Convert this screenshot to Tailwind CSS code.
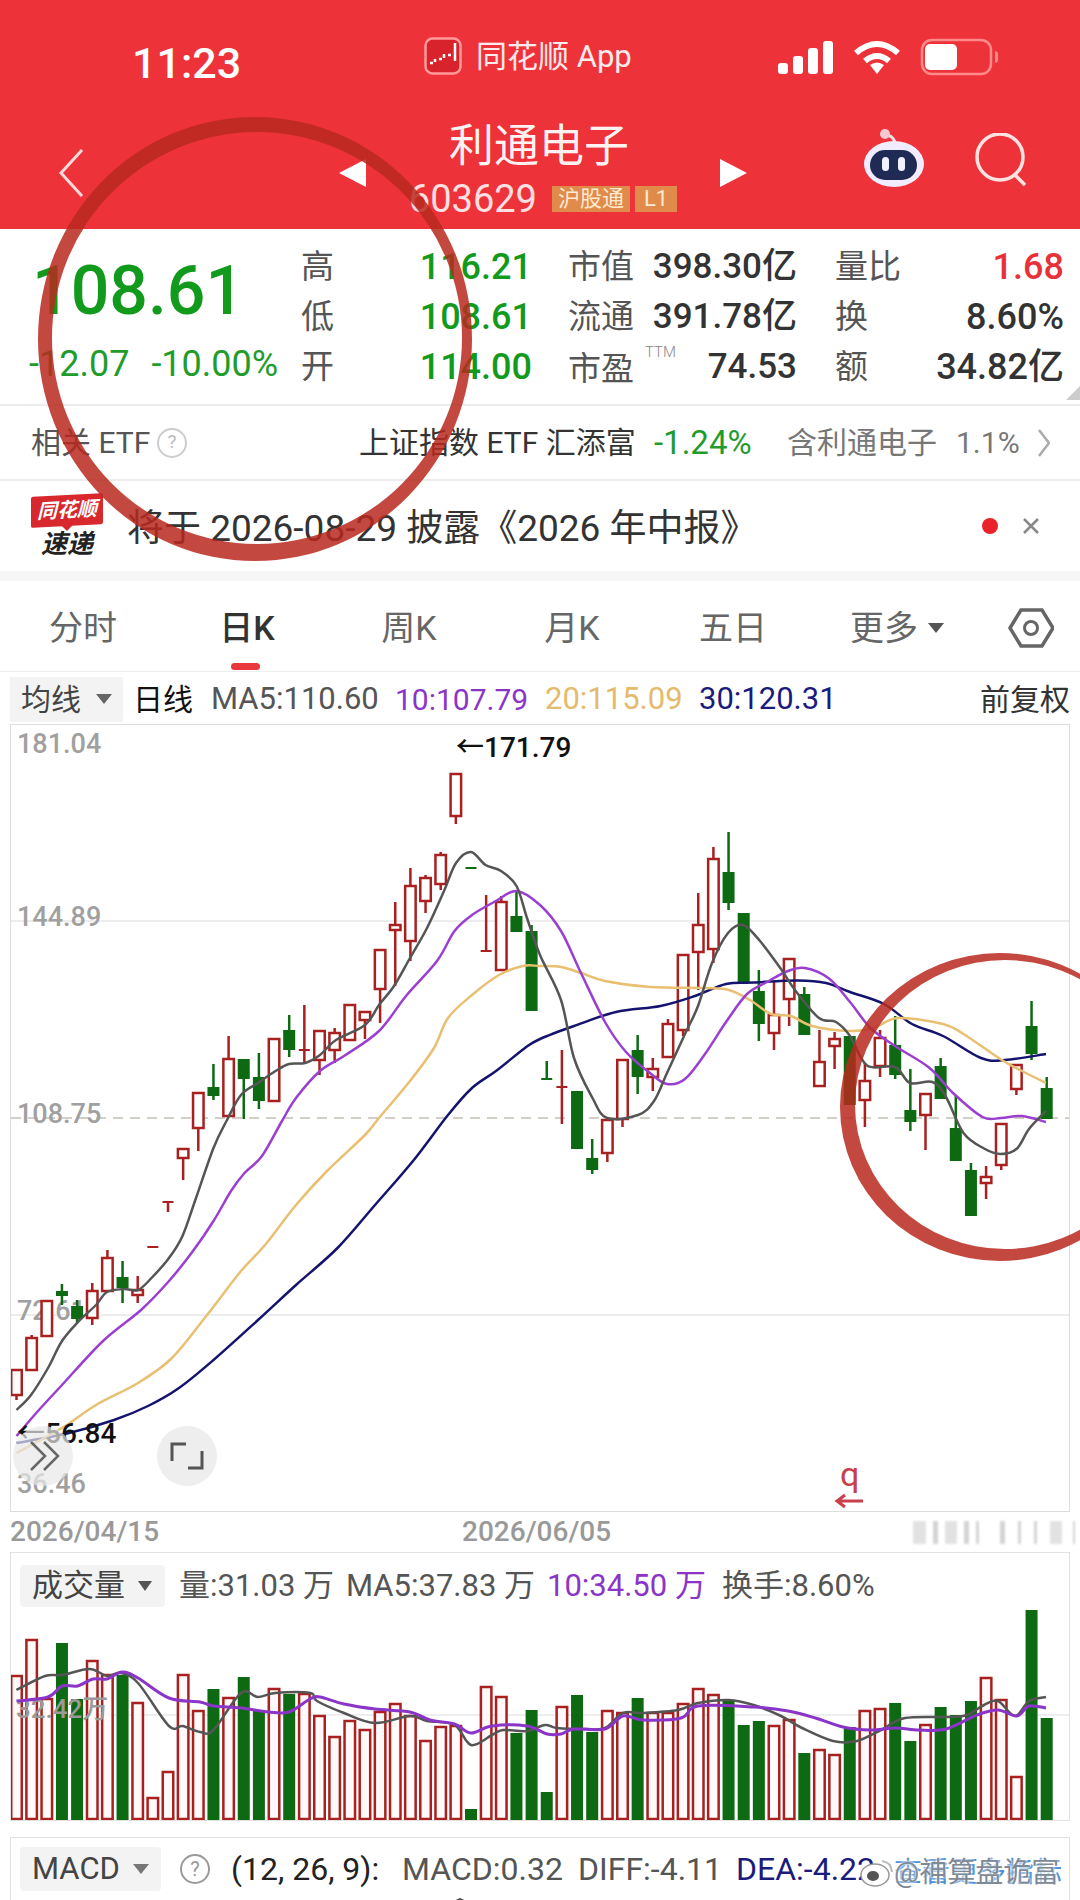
<!DOCTYPE html>
<html lang="zh">
<head>
    <meta charset="UTF-8">
    <title>利通电子</title>
    <script src="https://cdn.jsdelivr.net/npm/@tailwindcss/browser@4"></script>
</head>
<body class="bg-white">
<div class="relative w-[1080px] h-[1900px] overflow-hidden bg-white font-[Roboto,'Noto_Sans_CJK_SC',sans-serif] text-[#333]">

    <!-- 红色头部 -->
    <header class="h-[229px] bg-[#ee3239] text-white">
        <div class="flex items-center h-[118px]">
            <span class="ml-[132px] w-[292px] text-[43px] font-medium leading-none mt-[8px]">11:23</span>
            <svg class="w-[38px] h-[38px] -mt-[6px]" viewBox="0 0 38 38">
                <rect x="1.5" y="1.5" width="35" height="35" rx="7" fill="#d8232c" stroke="#ff9a9a" stroke-width="2.5"/>
                <path d="M6 26h3M11 25v-3M15 22h3M20 21v-4M24 18h3M31 24V6" stroke="#fff" stroke-width="2.5" fill="none"/>
            </svg>
            <span class="ml-[14px] w-[158px] text-[31px] leading-none text-white/90 -mt-[6px]">同花顺 App</span>
            <svg class="ml-auto mr-[82px] w-[224px] h-[40px] -mt-[3px]" viewBox="774 44 224 40">
                <g fill="#fff">
                    <rect x="778" y="69" width="10" height="11" rx="3"/>
                    <rect x="793" y="62" width="10" height="18" rx="3"/>
                    <rect x="808" y="54" width="10" height="26" rx="3"/>
                    <rect x="823" y="47" width="10" height="33" rx="3"/>
                    <path d="M877 80l-7-9q7-5 14 0z"/>
                    <rect x="925" y="50" width="32" height="26" rx="5"/>
                    <path d="M995 57q4 1 4 6t-4 6z" fill="#ff8a8a"/>
                </g>
                <path d="M856 59q21-18 42 0M865 67q12-10 24 0" fill="none" stroke="#fff" stroke-width="6"/>
                <rect x="922" y="46" width="69" height="34" rx="10" fill="none" stroke="#ff8a8a" stroke-width="2.5"/>
            </svg>
        </div>
        <div class="flex h-[111px]">
            <svg class="ml-[58px] mt-[31px] w-[26px] h-[48px]" viewBox="0 0 26 48"><path d="M24 1L3 24l21 23" fill="none" stroke="#ffd9d9" stroke-width="3"/></svg>
            <div class="ml-[255px] mt-[41px] w-0 h-0 border-y-[14px] border-y-transparent border-r-[27px] border-r-white"></div>
            <div class="w-[354px] pr-[8px] flex flex-col items-center">
                <div class="text-[45px] leading-[58px] text-white/95">利通电子</div>
                <div class="flex items-center gap-[5px] ml-[8px] mt-[8px]">
                    <span class="text-[38px] leading-[30px] text-white/85 mr-[10px]">603629</span>
                    <span class="bg-[#e08a4c] text-[#ffe9d0] text-[22px] leading-[26px] px-[6px]">沪股通</span>
                    <span class="bg-[#e08a4c] text-[#ffe9d0] text-[22px] leading-[26px] px-[9px]">L1</span>
                </div>
            </div>
            <div class="mt-[41px] w-0 h-0 border-y-[14px] border-y-transparent border-l-[27px] border-l-white"></div>
            <svg class="ml-[114px] mt-[11px] w-[66px] h-[60px]" viewBox="859 141 66 60">
                <path d="M884 147q6 0 9 7" fill="none" stroke="#f6dfe8" stroke-width="3"/>
                <circle cx="883" cy="146" r="5" fill="#f6c9d2"/>
                <ellipse cx="892" cy="176" rx="30" ry="23" fill="#f1ecff"/>
                <rect x="868" y="162" width="47" height="30" rx="15" fill="#1f2a55"/>
                <rect x="880" y="169" width="7" height="14" rx="3.5" fill="#f2f2ff"/>
                <rect x="896" y="169" width="7" height="14" rx="3.5" fill="#f2f2ff"/>
            </svg>
            <svg class="ml-[48px] mt-[15px] w-[54px] h-[54px]" viewBox="973 145 54 54">
                <circle cx="998" cy="169" r="23" fill="none" stroke="#ffe3e3" stroke-width="3.5"/>
                <path d="M1013 187l10 10" stroke="#ffe3e3" stroke-width="3.5"/>
            </svg>
        </div>
    </header>

    <!-- 行情 -->
    <section class="relative h-[177px] flex border-b-2 border-[#ececec]">
        <div class="w-[301px] pl-[29px]">
            <div class="text-[68px] leading-[70px] mt-[27px] font-medium text-[#119a1c] ml-[3px]">108.61</div>
            <div class="flex mt-[20px] text-[36px] leading-[36px] text-[#1f9c2c] whitespace-nowrap"><span>-12.07</span><span class="ml-[22px]">-10.00%</span></div>
        </div>
        <div class="w-[231px] pt-[13px] text-[36px] leading-[50px] font-medium text-[#119a1c]">
            <div class="flex justify-between"><span class="text-[33px] font-normal text-[#555]">高</span>116.21</div>
            <div class="flex justify-between"><span class="text-[33px] font-normal text-[#555]">低</span>108.61</div>
            <div class="flex justify-between"><span class="text-[33px] font-normal text-[#555]">开</span>114.00</div>
        </div>
        <div class="ml-[36px] w-[229px] pt-[13px] text-[35px] leading-[50px] font-medium">
            <div class="flex justify-between"><span class="text-[33px] font-normal text-[#555]">市值</span>398.30亿</div>
            <div class="flex justify-between"><span class="text-[33px] font-normal text-[#555]">流通</span>391.78亿</div>
            <div class="flex justify-between"><span class="text-[33px] font-normal text-[#555] relative top-[2px]">市盈<sup class="absolute left-[77px] top-[8px] text-[15px] font-light text-[#888]">TTM</sup></span>74.53</div>
        </div>
        <div class="ml-[38px] w-[229px] pt-[13px] text-[36px] leading-[50px] font-medium">
            <div class="flex justify-between"><span class="text-[33px] font-normal text-[#555]">量比</span><span class="text-[#e8323a]">1.68</span></div>
            <div class="flex justify-between"><span class="text-[33px] font-normal text-[#555]">换</span>8.60%</div>
            <div class="flex justify-between"><span class="text-[33px] font-normal text-[#555]">额</span>34.82亿</div>
        </div>
        <div class="absolute right-0 bottom-[4px] w-0 h-0 border-l-[14px] border-l-transparent border-b-[14px] border-b-[#ccc]"></div>
    </section>

    <!-- ETF -->
    <section class="h-[75px] flex items-center border-b-2 border-[#ececec] text-[30px] pl-[31px] whitespace-nowrap">
        <span class="w-[122px] text-[#555]">相关 ETF</span>
        <span class="ml-[4px] w-[30px] h-[30px] rounded-full border-2 border-[#ccc] text-[#bbb] text-[19px] flex items-center justify-center">?</span>
        <span class="ml-[172px] w-[295px]">上证指数 ETF 汇添富</span>
        <span class="w-[133px] text-[33px] text-[#1f9c2c]">-1.24%</span>
        <span class="w-[169px] text-[#777]">含利通电子</span>
        <span class="w-[82px] text-[#777]">1.1%</span>
        <svg class="w-[12px] h-[28px]" viewBox="0 0 12 28"><path d="M1 1l10 13L1 27" fill="none" stroke="#aaa" stroke-width="2.5"/></svg>
    </section>

    <!-- 速递 -->
    <section class="h-[90px] flex items-center pl-[31px]">
        <div class="w-[72px] flex flex-col items-center">
            <div class="relative bg-[#d9272e] w-[72px] h-[31px] text-white text-[20px] font-bold italic leading-[31px] text-center rounded-[2px] -skew-y-3">同花顺
                <div class="absolute left-[30px] top-[30px] w-0 h-0 border-x-[6px] border-x-transparent border-t-[6px] border-t-[#d9272e]"></div>
            </div>
            <div class="text-[26px] leading-[28px] mt-[4px] font-bold italic text-[#222]">速递</div>
        </div>
        <span class="ml-[24px] w-[610px] text-[37px] mt-[5px] whitespace-nowrap">将于 2026-08-29 披露《2026 年中报》</span>
        <span class="ml-[245px] w-[16px] h-[16px] rounded-full bg-[#e8232c]"></span>
        <svg class="ml-[24px] w-[18px] h-[18px]" viewBox="0 0 18 18"><path d="M2 2l14 14M16 2L2 16" stroke="#888" stroke-width="2.5"/></svg>
    </section>
    <div class="h-[10px] bg-[#f6f6f6]"></div>

    <!-- 周期 -->
    <nav class="relative h-[91px] grid grid-cols-[166px_162px_162px_164px_158px_170px_98px] items-center pt-[4px] border-b border-[#eee] text-[34px] text-[#666] text-center">
        <span>分时</span>
        <span class="text-[#333] font-medium">日K</span>
        <span>周K</span>
        <span>月K</span>
        <span>五日</span>
        <span class="flex items-center justify-center gap-[10px]">更多<i class="w-0 h-0 border-x-[8px] border-x-transparent border-t-[10px] border-t-[#555]"></i></span>
        <svg class="w-[46px] h-[40px] mx-auto" viewBox="1007 608 46 40">
            <path d="M1009 628l11-18h21l11 18-11 18h-21z" fill="none" stroke="#666" stroke-width="3.5"/>
            <circle cx="1030" cy="628" r="6.5" fill="none" stroke="#666" stroke-width="3"/>
        </svg>
        <div class="absolute left-[231px] bottom-[1px] w-[29px] h-[7px] rounded-full bg-[#e8383c]"></div>
    </nav>

    <!-- 均线 -->
    <div class="h-[52px] flex items-center pl-[10px] pt-[2px] text-[31px] whitespace-nowrap">
        <div class="w-[113px] h-[45px] bg-[#f3f3f3] flex items-center pl-[11px] text-[30px] text-[#444]">均线<i class="ml-[15px] w-0 h-0 border-x-[8px] border-x-transparent border-t-[10px] border-t-[#666]"></i></div>
        <span class="ml-[10px] w-[78px] text-[30px] text-[#111]">日线</span>
        <span class="w-[184px] text-[#555]">MA5:110.60</span>
        <span class="w-[150px] text-[30px] text-[#8a35c8]">10:107.79</span>
        <span class="w-[154px] text-[#e3bb6d]">20:115.09</span>
        <span class="text-[#1b1b7e]">30:120.31</span>
        <span class="ml-auto mr-[10px] text-[30px] text-[#333]">前复权</span>
    </div>

    <!-- K线 -->
    <div class="relative mx-[10px] h-[788px] border border-[#ddd]">
        <svg id="kline" class="absolute inset-0 w-full h-full" viewBox="11 727 1058 786"></svg>
    </div>
    <div class="h-[40px] flex items-center pl-[10px] text-[28px] text-[#999] font-medium">
        <span class="w-[452px]">2026/04/15</span>
        <span class="w-[451px]">2026/06/05</span>
        <div class="flex h-[23px] gap-[7px] blur-[1px]">
            <i class="w-[13px] bg-[#e2e2e2]"></i><i class="w-[5px] bg-[#d4d4d4]"></i><i class="w-[12px] bg-[#e2e2e2]"></i><i class="w-[5px] bg-[#d4d4d4]"></i><i class="w-[3px] bg-[#d4d4d4]"></i><i class="ml-[14px] w-[5px] bg-[#d4d4d4]"></i><i class="ml-[6px] w-[3px] bg-[#d4d4d4]"></i><i class="ml-[6px] w-[3px] bg-[#d4d4d4]"></i><i class="ml-[6px] w-[12px] bg-[#e2e2e2]"></i><i class="ml-[4px] w-[2px] bg-[#d4d4d4]"></i>
        </div>
    </div>

    <!-- 成交量 -->
    <div class="relative mx-[10px] h-[269px] border border-[#e2e2e2]">
        <svg id="vol" class="absolute inset-0 w-full h-full" viewBox="11 1555 1058 267"></svg>
        <div class="relative flex items-center h-[42px] mt-[12px] ml-[9px] text-[31px] text-[#555] whitespace-nowrap">
            <div class="w-[145px] h-[42px] bg-[#f3f3f3] rounded-[4px] flex items-center pl-[12px] text-[#444]">成交量<i class="ml-[13px] w-0 h-0 border-x-[7px] border-x-transparent border-t-[10px] border-t-[#555]"></i></div>
            <span class="ml-[14px] w-[167px]">量:31.03 万</span>
            <span class="w-[201px]">MA5:37.83 万</span>
            <span class="w-[175px] text-[#8a35c8]">10:34.50 万</span>
            <span>换手:8.60%</span>
        </div>
    </div>

    <!-- MACD -->
    <div class="relative mx-[10px] mt-[16px] h-[70px] border border-[#e2e2e2] border-b-0">
        <div class="flex items-center h-[44px] mt-[9px] ml-[9px] text-[32px] text-[#555] whitespace-nowrap">
            <div class="w-[141px] h-[44px] bg-[#f3f3f3] rounded-[4px] flex items-center pl-[12px] text-[31px] text-[#444]">MACD<i class="ml-[13px] w-0 h-0 border-x-[8px] border-x-transparent border-t-[10px] border-t-[#777]"></i></div>
            <span class="ml-[19px] w-[30px] h-[30px] rounded-full border-2 border-[#999] text-[#999] text-[20px] flex items-center justify-center">?</span>
            <span class="ml-[21px] w-[171px] text-[#222]">(12, 26, 9):</span>
            <span class="w-[176px]">MACD:0.32</span>
            <span class="w-[158px]">DIFF:-4.11</span>
            <span class="text-[#1b1b7e]">DEA:-4.22</span>
        </div>
        <svg class="absolute left-[434px] bottom-0 w-[30px] h-[10px]" viewBox="0 0 30 10"><path d="M1 9l14-7 14 7" fill="none" stroke="#444" stroke-width="2"/></svg>
    </div>

    <!-- 圈注 -->
    <svg class="absolute inset-0 w-[1080px] h-[1900px] pointer-events-none" viewBox="0 0 1080 1900">
        <path fill-rule="evenodd" fill="#b9291f" opacity=".85" d="M38 339A217 222 0 1 0 472 339A217 222 0 1 0 38 339ZM52 338A205 206 0 1 0 462 338A205 206 0 1 0 52 338Z"/>
        <path fill-rule="evenodd" fill="#b9291f" opacity=".85" d="M840 1107A160 154 0 1 0 1160 1107A160 154 0 1 0 840 1107ZM855 1104.5A150 144.5 0 1 0 1155 1104.5A150 144.5 0 1 0 855 1104.5Z"/>
    </svg>

    <!-- 水印 -->
    <div class="absolute left-[860px] top-[1855px] h-[36px] w-[210px] flex items-center">
        <svg class="w-[34px] h-[30px] shrink-0" viewBox="0 0 34 30">
            <ellipse cx="15" cy="17" rx="14" ry="11" fill="#fff" stroke="#999" stroke-width="1.5"/>
            <ellipse cx="13" cy="18" rx="6" ry="5" fill="#555"/>
            <path d="M22 3q9 1 10 11" fill="none" stroke="#bbb" stroke-width="2"/>
        </svg>
        <span class="relative text-[28px] leading-none whitespace-nowrap text-[#4a8ed6]">查看更多指标
            <span class="absolute left-0 top-0 text-[#7f8a96] [text-shadow:0_0_3px_#fff,0_0_3px_#fff]">@神算盘诡富</span>
        </span>
    </div>
</div>

<script>
    const X = i => 16.5 + 15.15 * i;
    const RED = '#a8201f', GREEN = '#0d6a12';

    // [颜色, 上影, 实体上, 实体下, 下影]
    const candles = [
        ['r',1372,1372,1397,1402],['r',1337,1340,1372,1372],['r',1303,1303,1338,1338],['g',1286,1293,1298,1307],
        ['g',1302,1308,1321,1325],['r',1285,1293,1320,1327],['r',1252,1260,1293,1293],['g',1263,1279,1290,1305],
        ['r',1278,1292,1297,1305],['r',1248,1248,1250,1250],['r',1203,1203,1205,1214],['r',1151,1151,1160,1182],
        ['r',1095,1095,1130,1153],['g',1066,1089,1098,1102],['r',1038,1061,1118,1118],['g',1061,1061,1081,1121],
        ['g',1055,1079,1103,1111],['r',1041,1041,1103,1103],['g',1017,1032,1052,1059],['r',1007,1051,1053,1065],
        ['r',1033,1033,1062,1077],['r',1030,1035,1052,1065],['r',1007,1007,1042,1042],['r',1014,1014,1022,1041],
        ['r',952,952,991,1025],['r',904,927,932,988],['r',870,888,943,963],['r',877,880,903,915],
        ['r',854,857,886,892],['r',776,776,818,826],['g',869,869,871,871],['r',897,952,954,954],
        ['r',898,904,972,972],['g',892,918,934,934],['g',927,933,1013,1013],['g',1063,1080,1082,1082],
        ['r',1052,1088,1090,1126],['g',1093,1093,1151,1151],['g',1141,1160,1172,1176],['r',1122,1122,1155,1164],
        ['r',1062,1062,1121,1129],['g',1037,1052,1079,1096],['r',1060,1071,1079,1093],['r',1021,1026,1059,1059],
        ['r',957,957,1032,1038],['r',895,927,954,992],['r',849,861,951,965],['g',834,874,905,912],
        ['g',915,915,985,985],['g',972,993,1026,1043],['r',984,1017,1035,1052],['r',961,961,1001,1028],
        ['g',989,996,1037,1037],['r',1032,1064,1088,1088],['r',1034,1041,1048,1071],['g',1038,1038,1107,1107],
        ['r',1065,1083,1102,1129],['r',1032,1040,1068,1079],['g',1018,1047,1077,1081],['g',1071,1112,1124,1133],
        ['r',1096,1096,1117,1152],['g',1060,1068,1101,1101],['g',1097,1130,1163,1163],['g',1165,1172,1218,1218],
        ['r',1168,1179,1185,1201],['r',1126,1126,1167,1172],['r',1067,1067,1091,1097],['g',1003,1028,1056,1062],
        ['g',1079,1090,1121,1121]
    ];

    const ma5 = '16.5,1412 31,1397 48,1370 62,1343 79,1323 96,1307 107,1294 124,1291 138,1292 151.5,1280 169,1260 182.5,1238 196,1200 213.5,1150 227,1122 241,1097 258,1085 275.5,1073 289,1066 305,1065 320,1057 336,1042 365,1027 379,1007 394,988 410,960 427,930 444,893 456,865 471,854 485.5,867 501,873 516.5,888 527,920 540,957 561,1002 574,1060 592,1099 607,1120 638,1117 654,1103 667,1075 685,1036 698,1008 712,965 728,935 743,927 760,943 781,971 795,992 819,1020 836,1024 850,1038 867,1067.5 895,1069 910,1085 932.5,1084 946,1099 963.5,1135 984,1150.5 1001,1156 1017,1150.5 1029,1131 1046,1113';
    const ma10 = '16.5,1438 38,1413 62,1387 103,1343 141,1312 169,1283 193,1253 213.5,1223 231,1193 244.5,1175 262,1158 282,1123 296,1100 320,1073 344,1058 379,1033 406,998 437,963 454.5,933 472,917 496,903 516.5,893 540,907 561,933 581,975 605,1024 626,1054 650,1075 667,1086 685,1081 705,1056 726,1024 747,996 767,984 788,973 805,970 829,980.5 850,1004 870.5,1030 895,1048 929,1069.5 953,1095 982.5,1119 1001,1120 1022,1118 1046,1124';
    const ma20 = '16.5,1455 62,1430 96,1407 138,1385 172,1360 207,1317 241,1273 265,1247 296,1207 327,1173 365,1137 379,1120 410,1083 434,1050 448,1020 472,997 499,977 523,968 540,968 561,969 581,975 605,983 650,989 705,990 729,992 750,1002 771,1016 791,1018 812,1028 850,1033 874,1030 898,1020 943,1026 963.5,1036 1001,1061.5 1022,1073 1046,1085';
    const ma30 = '16.5,1445 69,1435 114,1422 148,1408 179,1390 213.5,1362 258,1322 296,1287 337.5,1250 375,1207 413,1163 448,1117 472,1090 496,1073 525,1050 540,1041 574,1028 616,1014 660.5,1008 695,998 726,986 753.5,984.5 798,982.5 826,985 850,994 884,1006 912,1026 943,1038 981,1060 1005,1062 1046,1056';

    // 折线点转平滑曲线
    const smooth = str => {
        const p = str.split(' ').map(s => s.split(',').map(Number));
        let d = `M${p[0][0]} ${p[0][1]}`;
        for (let i = 0; i < p.length - 1; i++) {
            const a = p[i - 1] || p[i], b = p[i], c = p[i + 1], e = p[i + 2] || c;
            d += `C${b[0] + (c[0] - a[0]) / 6} ${b[1] + (c[1] - a[1]) / 6} ${c[0] - (e[0] - b[0]) / 6} ${c[1] - (e[1] - b[1]) / 6} ${c[0]} ${c[1]}`;
        }
        return d;
    };
    const line = (pts, color, w = 2) => `<path d="${smooth(pts)}" fill="none" stroke="${color}" stroke-width="${w}"/>`;
    const label = (x, y, t, size = 27, fill = '#a0a0a0', weight = 500) => `<text x="${x}" y="${y}" font-size="${size}" fill="${fill}" font-weight="${weight}">${t}</text>`;

    let k = '';
    k += '<path d="M11 923H1069M11 1317H1069" stroke="#e8e8e8" stroke-width="1.5"/>';
    k += '<path d="M11 1120H1069" stroke="#c4c0b4" stroke-width="1.5" stroke-dasharray="10 7"/>';
    k += label(17, 755, '181.04') + label(17, 928, '144.89') + label(17, 1125, '108.75') + label(17, 1322, '72.61') + label(17, 1495, '36.46');

    candles.forEach((c, i) => {
        const x = X(i), color = c[0] === 'r' ? RED : GREEN;
        const thin = c[3] - c[2] < 4;
        k += `<path d="M${x} ${c[1]}V${c[2]}M${x} ${c[3]}V${c[4]}" stroke="${color}" stroke-width="2.5"/>`;
        if (thin) k += `<rect x="${x - 5.5}" y="${c[2]}" width="11" height="${c[3] - c[2]}" fill="${color}"/>`;
        else if (c[0] === 'r') k += `<rect x="${x - 5.25}" y="${c[2]}" width="10.5" height="${c[3] - c[2]}" fill="#fff" stroke="${color}" stroke-width="2.5"/>`;
        else k += `<rect x="${x - 6}" y="${c[2]}" width="12" height="${c[3] - c[2]}" fill="${color}"/>`;
    });

    k += line(ma30, '#14146e', 2.5) + line(ma20, '#e9bf72', 2.5) + line(ma10, '#9b3fd0', 2.5) + line(ma5, '#555', 2.5);
    k += label(456, 759, '←171.79', 28, '#111');
    k += label(17, 1445, '←56.84', 28, '#111');
    k += '<circle cx="43" cy="1458" r="30" fill="#e8e8e8" fill-opacity=".7"/><path d="M31 1444l14 14-14 14M44 1444l14 14-14 14" fill="none" stroke="#666" stroke-width="2.5"/>';
    k += '<circle cx="187" cy="1458" r="30" fill="#eee"/><path d="M172 1463v-17h14M202 1453v17h-14" fill="none" stroke="#555" stroke-width="3"/>';
    k += '<text x="840" y="1488" font-size="34" fill="#c9404a">q</text><path d="M863 1503H837M845 1497l-8 6 8 6" fill="none" stroke="#c9404a" stroke-width="3"/>';
    document.getElementById('kline').innerHTML = k;

    // 成交量
    const volTops = [1678,1642,1701,1645,1701,1663,1677,1677,1705,1800,1774,1677,1713,1691,1700,1679,1713,1691,1696,1696,1718,1739,1723,1732,1714,1706,1718,1743,1729,1728,1811,1689,1699,1735,1712,1794,1709,1697,1734,1713,1715,1700,1715,1715,1706,1691,1697,1702,1727,1723,1728,1722,1755,1752,1757,1729,1713,1711,1705,1743,1727,1709,1717,1703,1680,1702,1779,1612,1720];
    const vma5 = '16.5,1692 45,1678 62,1677 89.5,1671 107,1678 120.5,1675 138,1685 169,1728 182.5,1728 200,1734 213.5,1732 241,1695 258,1699 275.5,1695 310,1695 317,1703 344,1715 375,1725 410,1718 427,1723 454.5,1727 471,1747 492,1737 503,1732 527,1733 545,1727 557,1730 585,1731 605,1730 623,1715 643,1715 678,1712 698,1705 729,1702 753.5,1707 781,1718 802,1730 833,1743 857,1743 881,1732 905,1720 950,1719 967,1717 984,1707 998,1703 1015,1718 1029,1703 1046,1699';
    const vma10 = '16.5,1703 48,1699 62,1688 77.5,1688 93,1681 107,1681 122,1674 138,1680 169,1700 200,1704 213.5,1708 241,1710 268.5,1714 289,1714 310,1701 320,1699 344,1706 375,1711 410,1714 430,1722 454.5,1726 471,1735 492,1728 527,1728 547,1736 561,1736 574,1731 605,1731 623,1718 643,1722 681,1720 698,1708 753.5,1709 788,1713 815.5,1720 843,1729 870.5,1732 895,1730 919,1732 946,1731 977,1717 998,1712 1017,1718 1029,1708 1046,1710';

    let v = '<path d="M11 1717H1069" stroke="#e8e8e8" stroke-width="1.5"/>';
    volTops.forEach((top, i) => {
        const x = X(i), up = candles[i][0] === 'r';
        v += up
            ? `<rect x="${x - 5.25}" y="${top}" width="10.5" height="${1821 - top}" fill="#fff8f8" fill-opacity=".85" stroke="${RED}" stroke-width="2.5"/>`
            : `<rect x="${x - 6}" y="${top}" width="12" height="${1822 - top}" fill="${GREEN}"/>`;
    });
    v += label(16, 1720, '32.42万', 26, '#9a9a9a');
    v += line(vma5, '#555', 2.5) + line(vma10, '#8a35c8', 3);
    document.getElementById('vol').innerHTML = v;
</script>
</body>
</html>
